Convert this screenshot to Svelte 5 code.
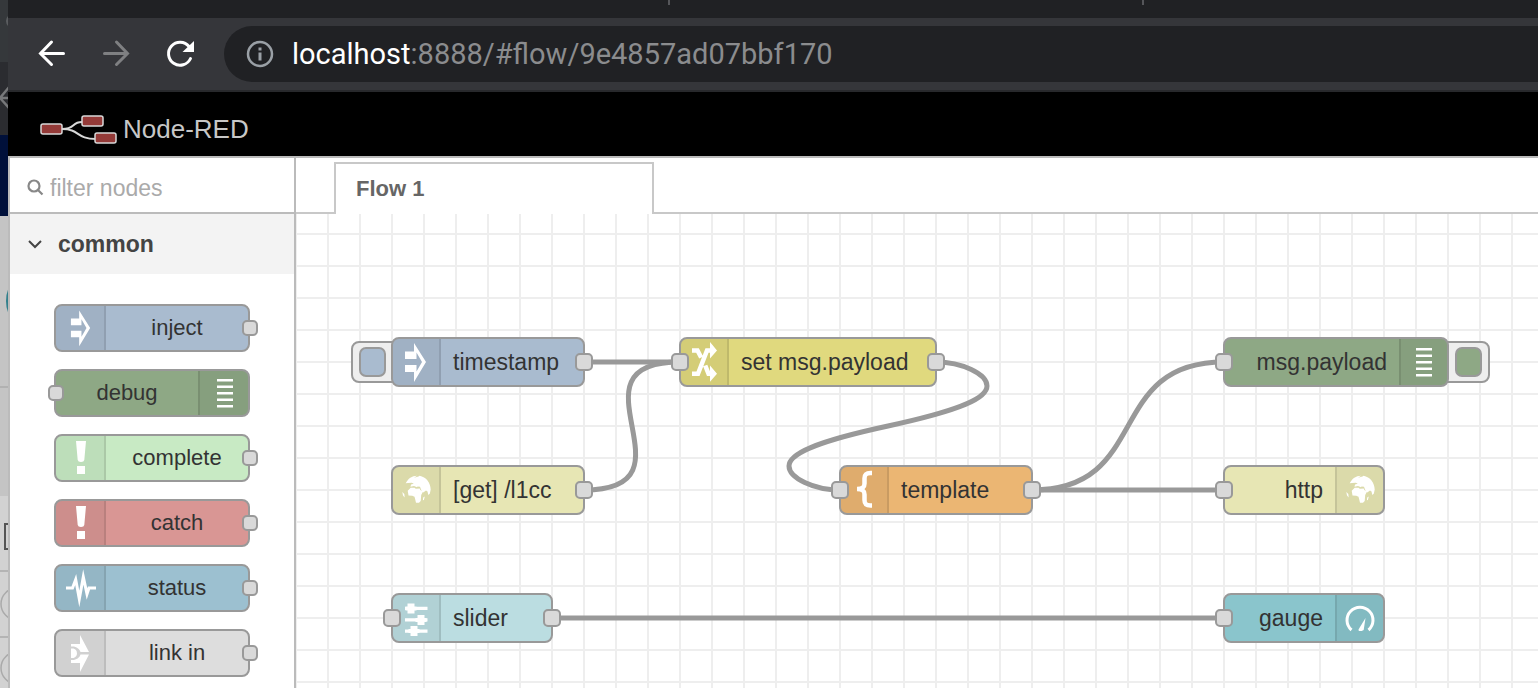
<script>
  const palette = [
    { label: 'inject', icon: 'inject', color: '#a9bbcf', out: true },
    { label: 'debug', icon: 'debug', color: '#8ea885', right: true, in: true },
    { label: 'complete', icon: 'alert', color: '#c8eac4', out: true },
    { label: 'catch', icon: 'alert', color: '#d99694', out: true },
    { label: 'status', icon: 'status', color: '#9cc0d0', out: true },
    { label: 'link in', icon: 'link', color: '#dddddd', out: true }
  ];

  const nodes = [
    { label: 'timestamp', icon: 'inject', color: '#a9bbcf', x: 96, y: 124, w: 192, out: true, button: true },
    { label: 'set msg.payload', icon: 'change', color: '#e0d97e', x: 384, y: 124, w: 256, in: true, out: true },
    { label: 'msg.payload', icon: 'debug', color: '#8ea885', x: 928, y: 124, w: 224, in: true, right: true, button: true },
    { label: '[get] /l1cc', icon: 'globe', color: '#e7e6b4', x: 96, y: 252, w: 192, out: true },
    { label: 'template', icon: 'brace', color: '#ebb673', x: 544, y: 252, w: 192, in: true, out: true },
    { label: 'http', icon: 'globe', color: '#e7e6b4', x: 928, y: 252, w: 160, in: true, right: true },
    { label: 'slider', icon: 'slider', color: '#bbdde1', x: 96, y: 380, w: 160, in: true, out: true },
    { label: 'gauge', icon: 'gauge', color: '#8ac5cc', x: 928, y: 380, w: 160, in: true, right: true }
  ];

  const wires = [
    'M288 148H384',
    'M288 276C408 276 264 148 384 148',
    'M640 148C666 148 691 160 691 172S666 196 592 212S493 240 493 252S518 276 544 276',
    'M736 276C856 276 808 148 928 148',
    'M736 276H928',
    'M256 404H928'
  ];
</script>

{#snippet icon(name)}
  <svg class="icon {name}" viewBox="0 0 48 48" aria-hidden="true" fill="#fff">
    {#if name === 'inject'}
      <path d="M13 13.500h9V5l12 19-12 20V34h-9v-7h11.500v6.500L30 24l-5.500-9.500V21H13z" />
    {:else if name === 'debug'}
      <path d="M16 10h16v2.500H16zM16 16.500h16V19H16zM16 23h16v2.500H16zM16 29.500h16V32H16zM16 36h16v2.500H16z" />
    {:else if name === 'alert'}
      <path d="M19 7h10l-1.700 19q-.3 2-3.300 2t-3.300-2zM20 32h8v8h-8z" />
    {:else if name === 'status'}
      <path fill="none" stroke="#fff" stroke-width="3" stroke-miterlimit="20" d="M9 24h6.500l3.200-8.500L22.300 35l4-22L30 30l2-6h7" />
    {:else if name === 'link'}
      <path d="M14 15h9V6l9 17h-8.500c-.8-3-4-5.500-8-5.500H14zM14 34h9v9l9-17.500h-8.500c-.8 3-4 5.500-8 5.500H14z" />
      <path d="M14 19.500h2.500a5 5 0 0 1 0 9.500H14z" />
    {:else if name === 'change'}
      <path fill="none" stroke="#fff" stroke-width="4.500" d="M12 12.500h5.500l3.700 7M12 35.700h6L27 12.500h5M25.200 27.500l3.300 8.200h3" />
      <path d="M30 4l7 8.500-7 8zM30 27.500l7 8.300-7 8z" />
    {:else if name === 'brace'}
      <path fill="none" stroke="#fff" stroke-width="4.500" d="M32 7h-1.500c-4.500 0-6 1.500-6 5.500v5c0 3.500-1.500 5.500-7.500 5.500 6 0 7.500 2 7.500 5.500v5.500c0 4 1.500 5.500 6 5.500H32" />
    {:else if name === 'globe'}
      <path d="M13.700 17.300C16 12.500 20 9.700 25 9.700l-3 2 4.500-1.200 1-.7c6.700 1.200 11 7 11.200 13.700l-.8 4-1.600 1.500-.8-3.500-1.500-1-2.700 2-2.300-3-1-2.800-2.500-.3-.5.900-3-1.300-3.500.7.500-2.200 2.800-.8-2-1-3.800.3z" />
      <path d="M15.700 24.700l3-3h4l1 1 4-.2.800 1.800 3 .4-2.300 4.300-.5 6-1.700 1.700h-3l-.7-3-.8-3-2.200-1-3.800-.2zM10.300 26l2 2 .4 3.500-1.700-2zM31.200 31.500l1.600-1-.9 3.500-1 .3z" />
    {:else if name === 'slider'}
      <path d="M13 12.800h22.500v3.200H13zM13 24.200h22.500v3.200H13zM13 35.500h22.500v3.200H13zM15.500 9.500h7v3h2v4h-2v3h-7v-3h-2v-4h2zM25.500 21h7v3h2v4h-2v3h-7v-3h-2v-4h2zM18.500 32h7v3h2v4h-2v3h-7v-3h-2v-4h2z" />
    {:else if name === 'gauge'}
      <path fill="none" stroke="#fff" stroke-width="3" d="M15.500 36a13 13 0 1 1 17 0" />
      <path d="M29.500 24l-1.800 12-2 1h-2.900l-.3-1.500z" />
    {/if}
  </svg>
{/snippet}

<div class="screen">
  <div class="behind" aria-hidden="true">
    <svg width="8" height="688" viewBox="0 0 8 688">
      <path fill="#35383b" d="M0 0h8v62H0z" /><path fill="#2b2c30" d="M0 62h8v73H0z" />
      <path fill="#00103a" d="M0 135h8v81H0z" /><path fill="#c4c4c4" d="M0 216h8v280H0z" />
      <path fill="#d2d2d2" d="M0 496h8v192H0z" />
      <ellipse cx="14" cy="301" rx="8" ry="17" fill="#32808c" /><circle cx="13" cy="21" r="7" fill="#5b5d60" />
      <g fill="none" stroke="#aaa" stroke-width="1.500"><path d="M0 387h8M0 571h8M0 637h8" /><circle cx="17" cy="604" r="16" /><circle cx="17" cy="668" r="16" /></g>
      <path fill="none" stroke="#77787a" stroke-width="2.500" d="M10 86L0 98l10 11M0 98h8" />
      <path fill="none" stroke="#555" stroke-width="2" d="M8 524H5v25h3" />
    </svg>
  </div>

  <div class="window">
    <div class="tabstrip"><i></i><i></i></div>
    <nav class="toolbar" aria-label="Browser">
      <button aria-label="Back"><svg width="32" height="32" viewBox="0 0 32 32" fill="none" stroke="#fff" stroke-width="3" stroke-linecap="round"><path d="M27.500 15.500H5M15.500 4L4.500 15.500l11 11" /></svg></button>
      <button aria-label="Forward" disabled><svg width="32" height="32" viewBox="0 0 32 32" fill="none" stroke="#7f8082" stroke-width="3" stroke-linecap="round"><path d="M4.500 15.500H27M16.500 4l11 11.500-11 11" /></svg></button>
      <button aria-label="Reload"><svg width="32" height="32" viewBox="0 0 32 32"><path fill="none" stroke="#fff" stroke-width="3" stroke-linecap="round" d="M26.500 20.500a11.500 11.500 0 1 1-1.500-12" /><path fill="#fff" d="M30 3v11H18.500z" /></svg></button>
      <div class="address">
        <svg width="28" height="28" viewBox="0 0 28 28" aria-hidden="true"><circle cx="14" cy="14" r="12" fill="none" stroke="#9aa0a6" stroke-width="2.500" /><path fill="#9aa0a6" d="M12.500 7.500h3v3h-3zM12.500 12.500h3v8h-3z" /></svg>
        <span><b>localhost</b>:8888/#flow/9e4857ad07bbf170</span>
      </div>
    </nav>

    <header>
      <svg width="78" height="30" viewBox="0 0 78 30" aria-hidden="true">
        <path fill="none" stroke="#d8d8d8" stroke-width="2" d="M22 14C36 14 31 7 42 7M22 14c18 0 14 10 34 10" />
        <g fill="#943a38" stroke="#d8d8d8" stroke-width="1.500"><rect x="1" y="9" width="21" height="10" rx="2" /><rect x="42" y="1" width="21" height="10" rx="2" /><rect x="55" y="18" width="21" height="10" rx="2" /></g>
      </svg>
      <span>Node-RED</span>
    </header>

    <main>
      <aside>
        <label class="search">
          <svg width="18" height="18" viewBox="0 0 18 18" fill="none" stroke="#888" stroke-width="2.200" aria-hidden="true"><circle cx="7" cy="7" r="5.500" /><path d="M11 11l4.500 4.500" /></svg>
          <input type="text" placeholder="filter nodes" aria-label="filter nodes" />
        </label>
        <button class="category" aria-expanded="true">
          <svg width="14" height="10" viewBox="0 0 14 10" fill="none" stroke="#444" stroke-width="2" aria-hidden="true"><path d="M1 2l6 6 6-6" /></svg>
          common
        </button>
        <ul>
          {#each palette as n}
            <li class="node" class:right={n.right} style:background={n.color}>
              <span class="tile">{@render icon(n.icon)}</span>
              <span class="label">{n.label}</span>
              {#if n.in}<i class="port in"></i>{/if}
              {#if n.out}<i class="port out"></i>{/if}
            </li>
          {/each}
        </ul>
      </aside>

      <section>
        <div class="tabs"><a href="#flow">Flow 1</a></div>
        <div class="canvas">
          <svg class="wires" aria-hidden="true">
            {#each wires as d}<path {d} />{/each}
          </svg>
          {#each nodes as n}
            <div class="slot" style="left:{n.x}px;top:{n.y}px;width:{n.w}px">
              {#if n.button}
                <button class="trigger" class:after={n.right} aria-label="Toggle {n.label}"><i style:background={n.color}></i></button>
              {/if}
              <div class="node flow" class:right={n.right} style:background={n.color}>
                <span class="tile">{@render icon(n.icon)}</span>
                <span class="label">{n.label}</span>
                {#if n.in}<i class="port in"></i>{/if}
                {#if n.out}<i class="port out"></i>{/if}
              </div>
            </div>
          {/each}
        </div>
      </section>
    </main>
  </div>
</div>

<style>
  :global(body) { overflow: hidden; }
  * { box-sizing: border-box; }
  button { border: 0; padding: 0; background: none; font: inherit; color: inherit; }
  svg { display: block; flex: none; }
  .screen { display: flex; height: 100vh; font-family: "Liberation Sans", Arial, sans-serif; color: #333; }
  .behind { flex: none; width: 8px; overflow: hidden; background: #d2d2d2; }
  .window { flex: 1; min-width: 0; display: flex; flex-direction: column; background: #fff; }

  .tabstrip { height: 18px; flex: none; display: grid; grid-template-columns: 662px 474px 1fr; background: #202124; }
  .tabstrip i { height: 5px; border-right: 2px solid #55565a; }
  .toolbar { height: 74px; flex: none; display: flex; align-items: center; gap: 32px; padding-left: 28px; background: #35363a; border-bottom: 2px solid #28292c; }
  .address { flex: 1; height: 56px; display: flex; align-items: center; gap: 18px; margin-left: -4px; padding-left: 22px; border-radius: 28px 0 0 28px; background: #202124; color: #8b8c8e; font: 29px Roboto, sans-serif; white-space: nowrap; }
  .address b { font-weight: 400; color: #fff; }

  header { height: 64px; flex: none; display: flex; align-items: center; gap: 5px; padding: 10px 0 0 32px; background: #000; color: #c7c7c7; font-size: 26px; }
  header svg { margin-top: 2px; }

  main { flex: 1; min-height: 0; display: flex; border: solid #bbb; border-width: 2px 0 0 2px; }
  aside { flex: none; width: 286px; overflow: hidden; border-right: 2px solid #bbb; }
  .search { height: 56px; display: flex; align-items: center; gap: 5px; padding: 6px 0 0 17px; border-bottom: 2px solid #bbb; }
  input { flex: 1; min-width: 0; border: 0; padding: 0; outline: 0; background: none; font: 23px "Liberation Sans", Arial, sans-serif; color: #333; }
  input::placeholder { color: #aaa; opacity: 1; }
  .category { width: 100%; height: 60px; display: flex; align-items: center; gap: 16px; padding-left: 18px; background: #f3f3f3; color: #444; font-size: 23px; font-weight: 700; }
  ul { list-style: none; margin: 0; padding: 30px 44px; display: grid; gap: 17px; }

  .node { position: relative; height: 48px; display: flex; border: 2px solid #999; border-radius: 8px; font-size: 22px; line-height: 26px; }
  .tile { flex: none; width: 50px; display: grid; place-items: center; border-right: 2px solid rgba(0, 0, 0, 0.1); border-radius: 6px 0 0 6px; background: rgba(0, 0, 0, 0.05); }
  .icon { width: 48px; height: 48px; margin: -2px 0 -2px 1px; }
  ul .inject { width: 44px; height: 44px; }
  .label { flex: 1; align-self: center; text-align: center; white-space: nowrap; }
  .right { flex-direction: row-reverse; }
  .right .tile { border-width: 0 0 0 2px; border-style: solid; border-color: rgba(0, 0, 0, 0.1); border-radius: 0 6px 6px 0; }
  .port { position: absolute; top: 14px; width: 16px; height: 16px; border: 2px solid #999; border-radius: 5px; background: #d9d9d9; }
  .in { left: -8px; }
  .out { right: -10px; }

  section { flex: 1; min-width: 0; display: flex; flex-direction: column; }
  .tabs { height: 56px; flex: none; display: flex; align-items: flex-end; padding-left: 38px; box-shadow: inset 0 -2px #c8c8c8; }
  .tabs a { width: 320px; height: 52px; padding: 0 20px; border: solid #c8c8c8; border-width: 2px 2px 0; background: #fff; color: #666; font-size: 22px; font-weight: 700; line-height: 50px; text-decoration: none; }
  .canvas { position: relative; flex: 1; overflow: hidden; background: linear-gradient(90deg, #eee 2px, transparent 2px) 31px 0 / 32px 32px, linear-gradient(#eee 2px, transparent 2px) 0 19px / 32px 32px; }
  .wires { position: absolute; inset: 0; width: 100%; height: 100%; fill: none; stroke: #999; stroke-width: 5px; }
  .slot { position: absolute; }
  .flow { height: 50px; margin: -1px; font-size: 23px; }
  .flow .tile { width: 48px; }
  .flow .icon { margin-left: -1px; }
  .flow .label { text-align: left; padding: 0 12px; }
  .flow.right .label { text-align: right; }
  .flow .port { width: 18px; height: 18px; }
  .flow .in { left: -10px; }
  .flow .out { right: -10px; }
  .trigger { position: absolute; left: -41px; top: 3px; width: 52px; height: 42px; padding: 4px 6px; border: 2px solid #999; border-radius: 8px; background: #eee; }
  .trigger i { display: block; width: 27px; height: 30px; border: 2px solid #999; border-radius: 7px; }
  .trigger.after { left: auto; right: -42px; padding-left: 15px; }
</style>
